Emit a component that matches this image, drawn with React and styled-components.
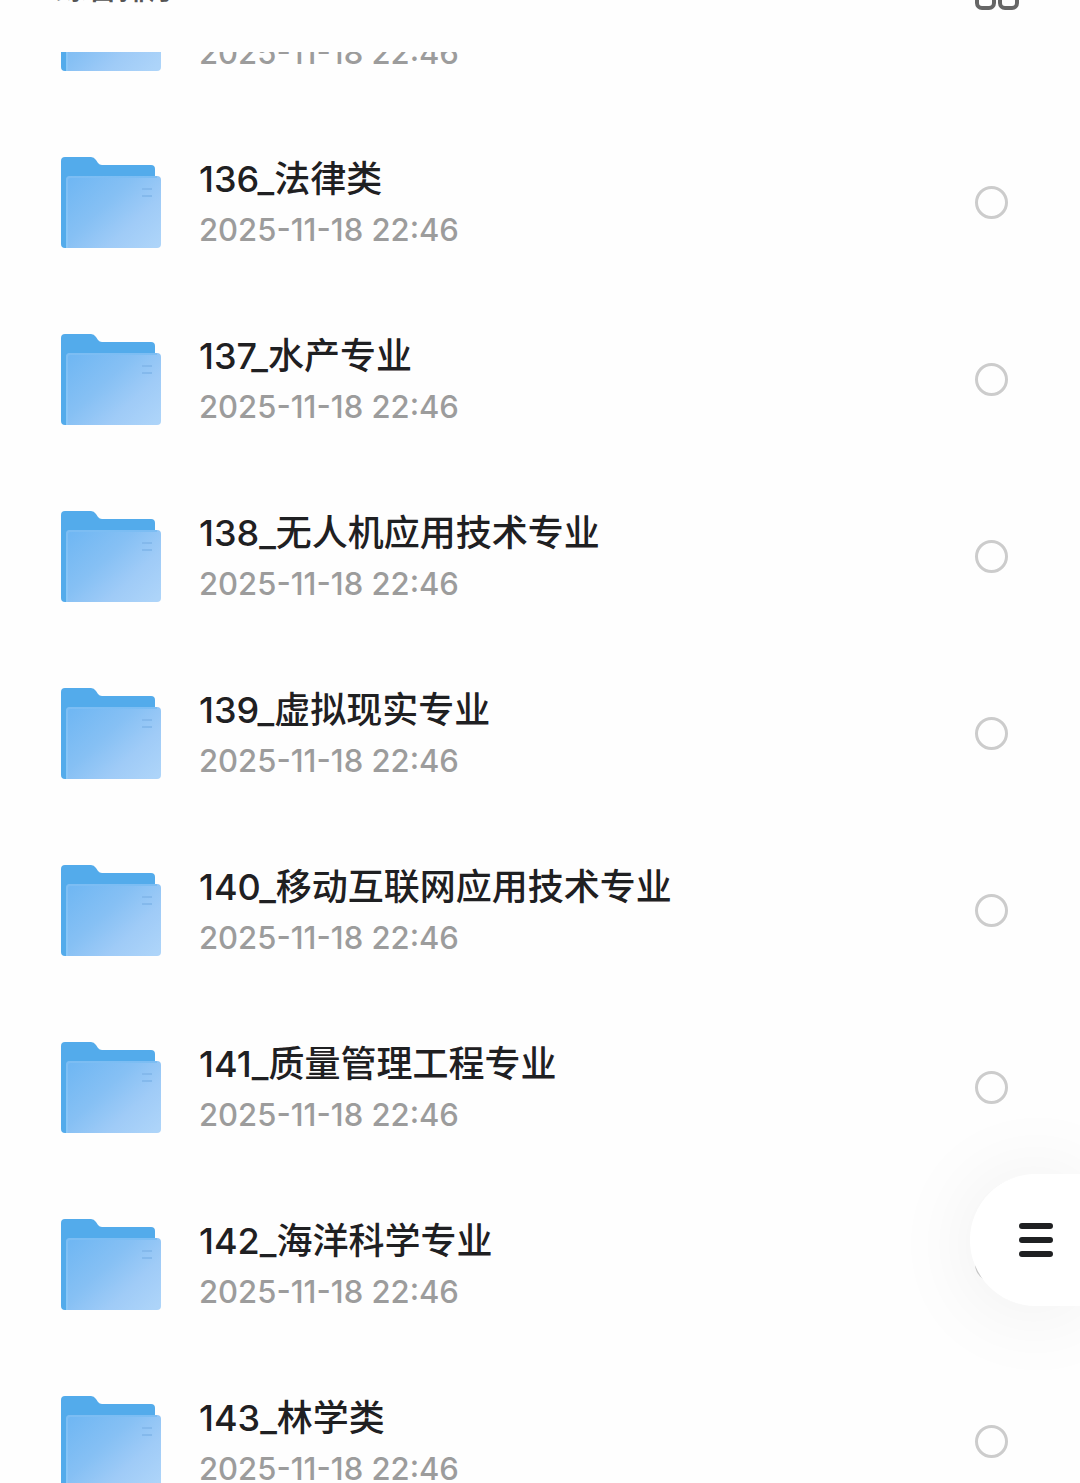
import React, { useState } from 'react';
import styled, { createGlobalStyle } from 'styled-components';

const folders = [
  { id: 135, name: '', date: '2025-11-18 22:46' },
  { id: 136, name: '136_法律类', date: '2025-11-18 22:46' },
  { id: 137, name: '137_水产专业', date: '2025-11-18 22:46' },
  { id: 138, name: '138_无人机应用技术专业', date: '2025-11-18 22:46' },
  { id: 139, name: '139_虚拟现实专业', date: '2025-11-18 22:46' },
  { id: 140, name: '140_移动互联网应用技术专业', date: '2025-11-18 22:46' },
  { id: 141, name: '141_质量管理工程专业', date: '2025-11-18 22:46' },
  { id: 142, name: '142_海洋科学专业', date: '2025-11-18 22:46' },
  { id: 143, name: '143_林学类', date: '2025-11-18 22:46' },
];

const FolderIcon = () => (
  <svg width="100" height="92" viewBox="0 0 100 92" aria-hidden="true">
    <defs>
      <linearGradient id="folder-front" x1="0" y1="0.1" x2="1" y2="0.9">
        <stop offset="0" stopColor="#70b7f3" />
        <stop offset="0.4" stopColor="#86c0f4" />
        <stop offset="0.7" stopColor="#9fcbf7" />
        <stop offset="1" stopColor="#add4f9" />
      </linearGradient>
      <linearGradient id="folder-edge" x1="0" y1="0" x2="0" y2="1">
        <stop offset="0" stopColor="#7cbdf3" />
        <stop offset="1" stopColor="#8cc8f8" />
      </linearGradient>
    </defs>
    <path
      d="M4 0H30Q33 0 35 3L37 6Q38.500 8 41 8H90Q94 8 94 12V88H9L6 91H4Q0 91 0 87V4Q0 0 4 0Z"
      fill="#53abeb"
    />
    <path d="M9 19H96Q100 19 100 23V87Q100 91 96 91H5V23Q5 19 9 19Z" fill="url(#folder-front)" />
    <path d="M9 19H96V21H9Q7 21 7 23V91H5V23Q5 19 9 19Z" fill="url(#folder-edge)" />
    <path d="M81 32H91M81 39H91" stroke="#84b9ec" strokeWidth="2" />
  </svg>
);

const GridIcon = () => (
  <svg width="44" height="44" viewBox="0 0 44 44" fill="none" stroke="#666" strokeWidth="4" aria-hidden="true">
    <rect x="2" y="2" width="17" height="17" rx="5" />
    <rect x="25" y="2" width="17" height="17" rx="5" />
    <rect x="2" y="25" width="17" height="17" rx="5" />
    <rect x="25" y="25" width="17" height="17" rx="5" />
  </svg>
);

const MenuIcon = () => (
  <svg width="34" height="34" viewBox="0 0 34 34" stroke="#1f2022" strokeWidth="6" strokeLinecap="round" aria-hidden="true">
    <path d="M3 3H31M3 17H31M3 31H31" />
  </svg>
);

const App = () => {
  const [selected, setSelected] = useState([]);

  const toggle = (id) => {
    setSelected(selected.includes(id) ? selected.filter((item) => item !== id) : [...selected, id]);
  };

  return (
    <Page>
      <GlobalStyle />
      <Header>
        <SortButton type="button">综合排序</SortButton>
        <IconButton type="button" aria-label="切换视图">
          <GridIcon />
        </IconButton>
      </Header>
      <Viewport>
        <List>
          {folders.map(({ id, name, date }) => (
            <Row key={id}>
              <FolderIcon />
              <Info htmlFor={`folder-${id}`}>
                <Name>{name}</Name>
                <Time>{date}</Time>
              </Info>
              <Check
                type="checkbox"
                id={`folder-${id}`}
                checked={selected.includes(id)}
                onChange={() => toggle(id)}
              />
            </Row>
          ))}
        </List>
      </Viewport>
      <FloatingMenu type="button" aria-label="菜单">
        <MenuIcon />
      </FloatingMenu>
    </Page>
  );
};

const GlobalStyle = createGlobalStyle`
  * {
    box-sizing: border-box;
  }
  body {
    margin: 0;
    background: #fefefe;
    font-family: Inter, 'Noto Sans CJK SC', sans-serif;
  }
  button {
    padding: 0;
    border: none;
    background: transparent;
    font-family: inherit;
    cursor: pointer;
  }
`;

const Page = styled.main`
  display: flex;
  flex-direction: column;
  height: 100vh;
  overflow: hidden;
`;

/* the bar is partly scrolled out at the top */
const Header = styled.header`
  display: flex;
  flex: none;
  align-items: center;
  justify-content: space-between;
  height: 128px;
  margin-top: -76px;
  padding: 0 61px 0 56px;
`;

const SortButton = styled.button`
  color: #555;
  font-size: 31px;
  font-weight: 500;
  line-height: 36px;
`;

const IconButton = styled.button`
  display: flex;
`;

const Viewport = styled.section`
  flex: 1;
  min-height: 0;
  overflow: hidden;
`;

const List = styled.ul`
  margin: -115px 0 0;
  padding: 0;
  list-style: none;
`;

const Row = styled.li`
  display: flex;
  align-items: center;
  gap: 38px;
  height: 177px;
  padding: 0 72px 0 61px;
`;

const Info = styled.label`
  display: flex;
  flex: 1;
  flex-direction: column;
  min-width: 0;
  padding-top: 2px;
`;

const Name = styled.span`
  min-height: 52px;
  color: #1f2022;
  font-size: 36px;
  font-weight: 500;
  line-height: 52px;
  white-space: nowrap;
`;

const Time = styled.span`
  color: #9c9c9c;
  font-size: 31px;
  font-weight: 500;
  line-height: 50px;
`;

const Check = styled.input`
  flex: none;
  width: 33px;
  height: 33px;
  margin: 0;
  border: 3px solid #ccc;
  border-radius: 50%;
  appearance: none;
  cursor: pointer;
  &:checked {
    border-color: #53abeb;
    background: #53abeb;
  }
`;

const FloatingMenu = styled.button`
  && {
    position: fixed;
    right: 0;
    bottom: 177px;
    display: flex;
    align-items: center;
    width: 110px;
    height: 132px;
    padding-left: 49px;
    border-radius: 66px 0 0 66px;
    background: #fff;
    box-shadow: 0 4px 90px rgba(0, 0, 0, 0.07);
  }
`;

export default App;
